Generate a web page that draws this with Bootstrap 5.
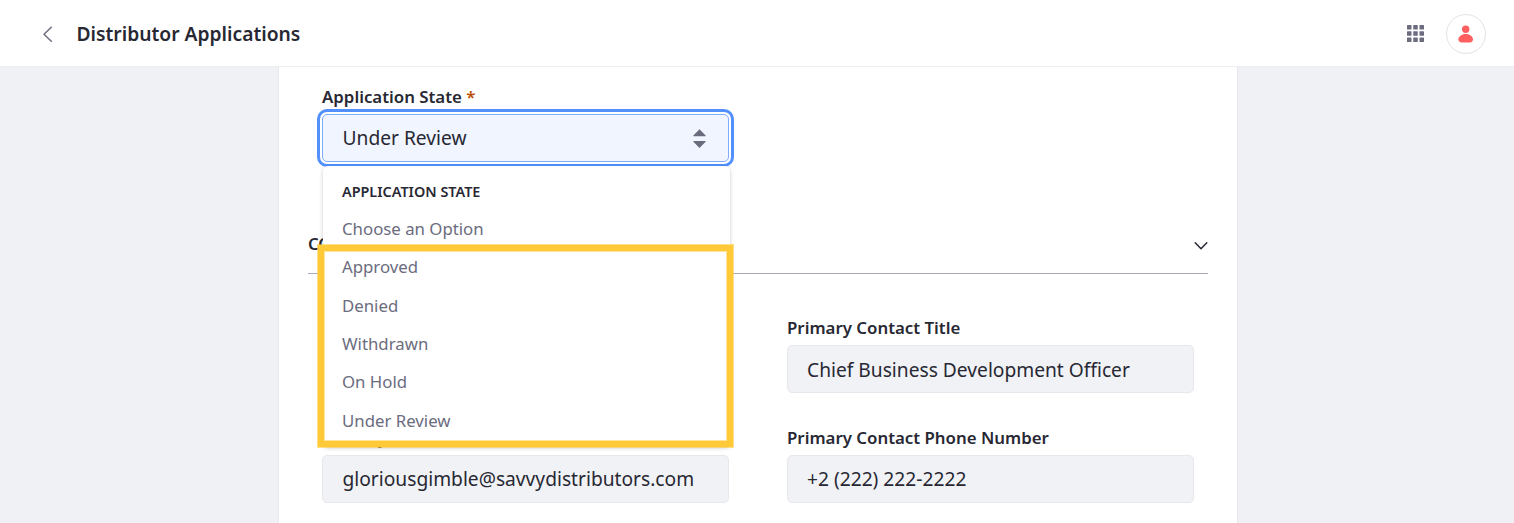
<!DOCTYPE html>
<html lang="en">
<head>
<meta charset="utf-8">
<meta name="viewport" content="width=device-width, initial-scale=1">
<title>Distributor Applications</title>
<link href="https://cdn.jsdelivr.net/npm/bootstrap@5.3.0/dist/css/bootstrap.min.css" rel="stylesheet">
<style>
  body { font-family: "Noto Sans", sans-serif; color: #272833; background: #f0f1f5; height: 100vh; overflow: hidden; }
  .app-bar { height: 67px; border-bottom: 1px solid #eeeff3; padding: 2px 28px 0 42px; }
  .app-title { font-size: 19.25px; font-weight: 600; margin-left: 22.5px; }
  .app-grid { margin: 0 22px 2px 0; }
  .avatar { width: 40px; height: 40px; border: 1px solid #e2e2e8; }
  .sheet { width: 960px; height: 456px; margin-left: calc(50% - 479px); border: solid #e7e7ed; border-width: 0 1px; padding: 17px 29px 0; }
  .fields { padding: 0 14px; }
  .panel-body { padding-top: 41px; }
  .fields .row { --bs-gutter-x: 58px; }
  .field-label { display: block; font-size: 16.83px; line-height: 25px; font-weight: 600; margin-bottom: 5px; white-space: nowrap; }
  .required { color: #b95000; }
  .field-box { height: 48px; padding: 0 19.5px; font-size: 19.2px; line-height: 46px; background: #f1f2f5; color: #272833; border: 1px solid #e7e7ed; border-radius: 5px; }
  .field-end { padding-left: 19px; }
  .field-title { line-height: 48px; }
  .field-row { height: 110px; }
  .state-box { background: #f0f5ff; border-color: #80acff; box-shadow: 0 0 0 2px #fff, 0 0 0 5px #528fff; }
  .state-menu { top: 52px; left: .5px; width: 407px; height: 281px; padding: 15px 0 0; margin: 0; border: 0; border-radius: 5px; font-size: 16.8px; box-shadow: 0 1px 5px -1px rgba(0,0,0,.3); }
  .state-menu .dropdown-header { font-size: 14.4px; font-weight: 600; line-height: 22px; padding: 0 19.5px; margin-bottom: 6.8px; color: #272833; }
  .state-menu .dropdown-item { height: 38.4px; line-height: 38.4px; padding: 0 19.5px; color: #6b6c7e; }
  .marker { left: -4px; top: 131px; width: 415px; height: 202px; border: 6px solid #ffc937; box-shadow: 0 0 0 1px rgba(255,201,55,.6), inset 0 0 0 1px rgba(255,201,55,.5); pointer-events: none; z-index: 1001; }
  .panel-head { height: 58px; margin-top: 22px; padding-bottom: 1px; border-bottom: 1px solid #a7a9bc; font-size: 16.8px; font-weight: 600; }
  .panel-head svg { margin-top: 3px; }
</style>
</head>
<body>
<header class="app-bar d-flex align-items-center justify-content-between bg-white">
  <div class="d-flex align-items-center">
    <svg width="12" height="18" viewBox="0 0 12 18" fill="none" stroke="#6b6c7e" stroke-width="1.5" stroke-linecap="round" stroke-linejoin="round"><path d="M9.3 2.3 2 9.3l7.3 7"/></svg>
    <h1 class="app-title mb-0">Distributor Applications</h1>
  </div>
  <div class="d-flex align-items-center">
    <svg class="app-grid" width="17" height="17" viewBox="0 0 17 17" fill="#6b6c7e">
      <rect width="4.5" height="4.5" rx=".6"/><rect x="6.25" width="4.5" height="4.5" rx=".6"/><rect x="12.5" width="4.5" height="4.5" rx=".6"/>
      <rect y="6.25" width="4.5" height="4.5" rx=".6"/><rect x="6.25" y="6.25" width="4.5" height="4.5" rx=".6"/><rect x="12.5" y="6.25" width="4.5" height="4.5" rx=".6"/>
      <rect y="12.5" width="4.5" height="4.5" rx=".6"/><rect x="6.25" y="12.5" width="4.5" height="4.5" rx=".6"/><rect x="12.5" y="12.5" width="4.5" height="4.5" rx=".6"/>
    </svg>
    <div class="avatar rounded-circle d-flex align-items-center justify-content-center">
      <svg width="16" height="18" viewBox="0 0 16 18" fill="#ff5f5f"><circle cx="7.700" cy="4.200" r="3.700"/><path d="M7.700 8.900c4.200 0 7.300 2.600 7.300 5.400 0 2.100-1.700 3.200-3.500 3.200H3.900C2.100 17.500.4 16.400.4 14.300.4 11.500 3.500 8.900 7.700 8.900Z"/></svg>
    </div>
  </div>
</header>

<main class="sheet bg-white">
  <div class="fields">
    <div class="row">
      <div class="col-6 field-row">
        <label class="field-label">Application State <span class="required">*</span></label>
        <div class="position-relative">
          <div class="field-box state-box d-flex align-items-center justify-content-between">
            <span>Under Review</span>
            <svg width="17" height="20" viewBox="0 0 17 20" fill="#6b6c7e"><path d="M7.500 1.200 13.600 7.400c.3.4.1.8-.4.800H1.800C1.300 8.200 1.100 7.800 1.400 7.400ZM7.500 19.900 1.400 13.700c-.3-.4-.1-.8.4-.800h11.400c.5 0 .7.4.4.800Z"/></svg>
          </div>
          <div class="dropdown-menu show state-menu">
            <div class="dropdown-header text-uppercase">Application State</div>
            <a class="dropdown-item">Choose an Option</a>
            <a class="dropdown-item">Approved</a>
            <a class="dropdown-item">Denied</a>
            <a class="dropdown-item">Withdrawn</a>
            <a class="dropdown-item">On Hold</a>
            <a class="dropdown-item">Under Review</a>
          </div>
          <div class="marker position-absolute"></div>
        </div>
      </div>
    </div>
  </div>

  <div class="panel-head d-flex align-items-center justify-content-between">
    <span>CO</span>
    <svg width="14" height="9" viewBox="0 0 14 9" fill="none" stroke="#272833" stroke-width="1.5" stroke-linecap="round" stroke-linejoin="round"><path d="M1.200 1.800 7 7.700l5.800-5.900"/></svg>
  </div>

  <div class="fields panel-body">
    <div class="row">
      <div class="col-6 field-row"></div>
      <div class="col-6 field-row">
        <label class="field-label">Primary Contact Title</label>
        <div class="field-box field-end field-title">Chief Business Development Officer</div>
      </div>
      <div class="col-6 field-row">
        <label class="field-label">Primary</label>
        <div class="field-box">gloriousgimble@savvydistributors.com</div>
      </div>
      <div class="col-6 field-row">
        <label class="field-label">Primary Contact Phone Number</label>
        <div class="field-box field-end">+2 (222) 222-2222</div>
      </div>
    </div>
  </div>
</main>
<script src="https://cdn.jsdelivr.net/npm/bootstrap@5.3.0/dist/js/bootstrap.bundle.min.js"></script>
</body>
</html>
